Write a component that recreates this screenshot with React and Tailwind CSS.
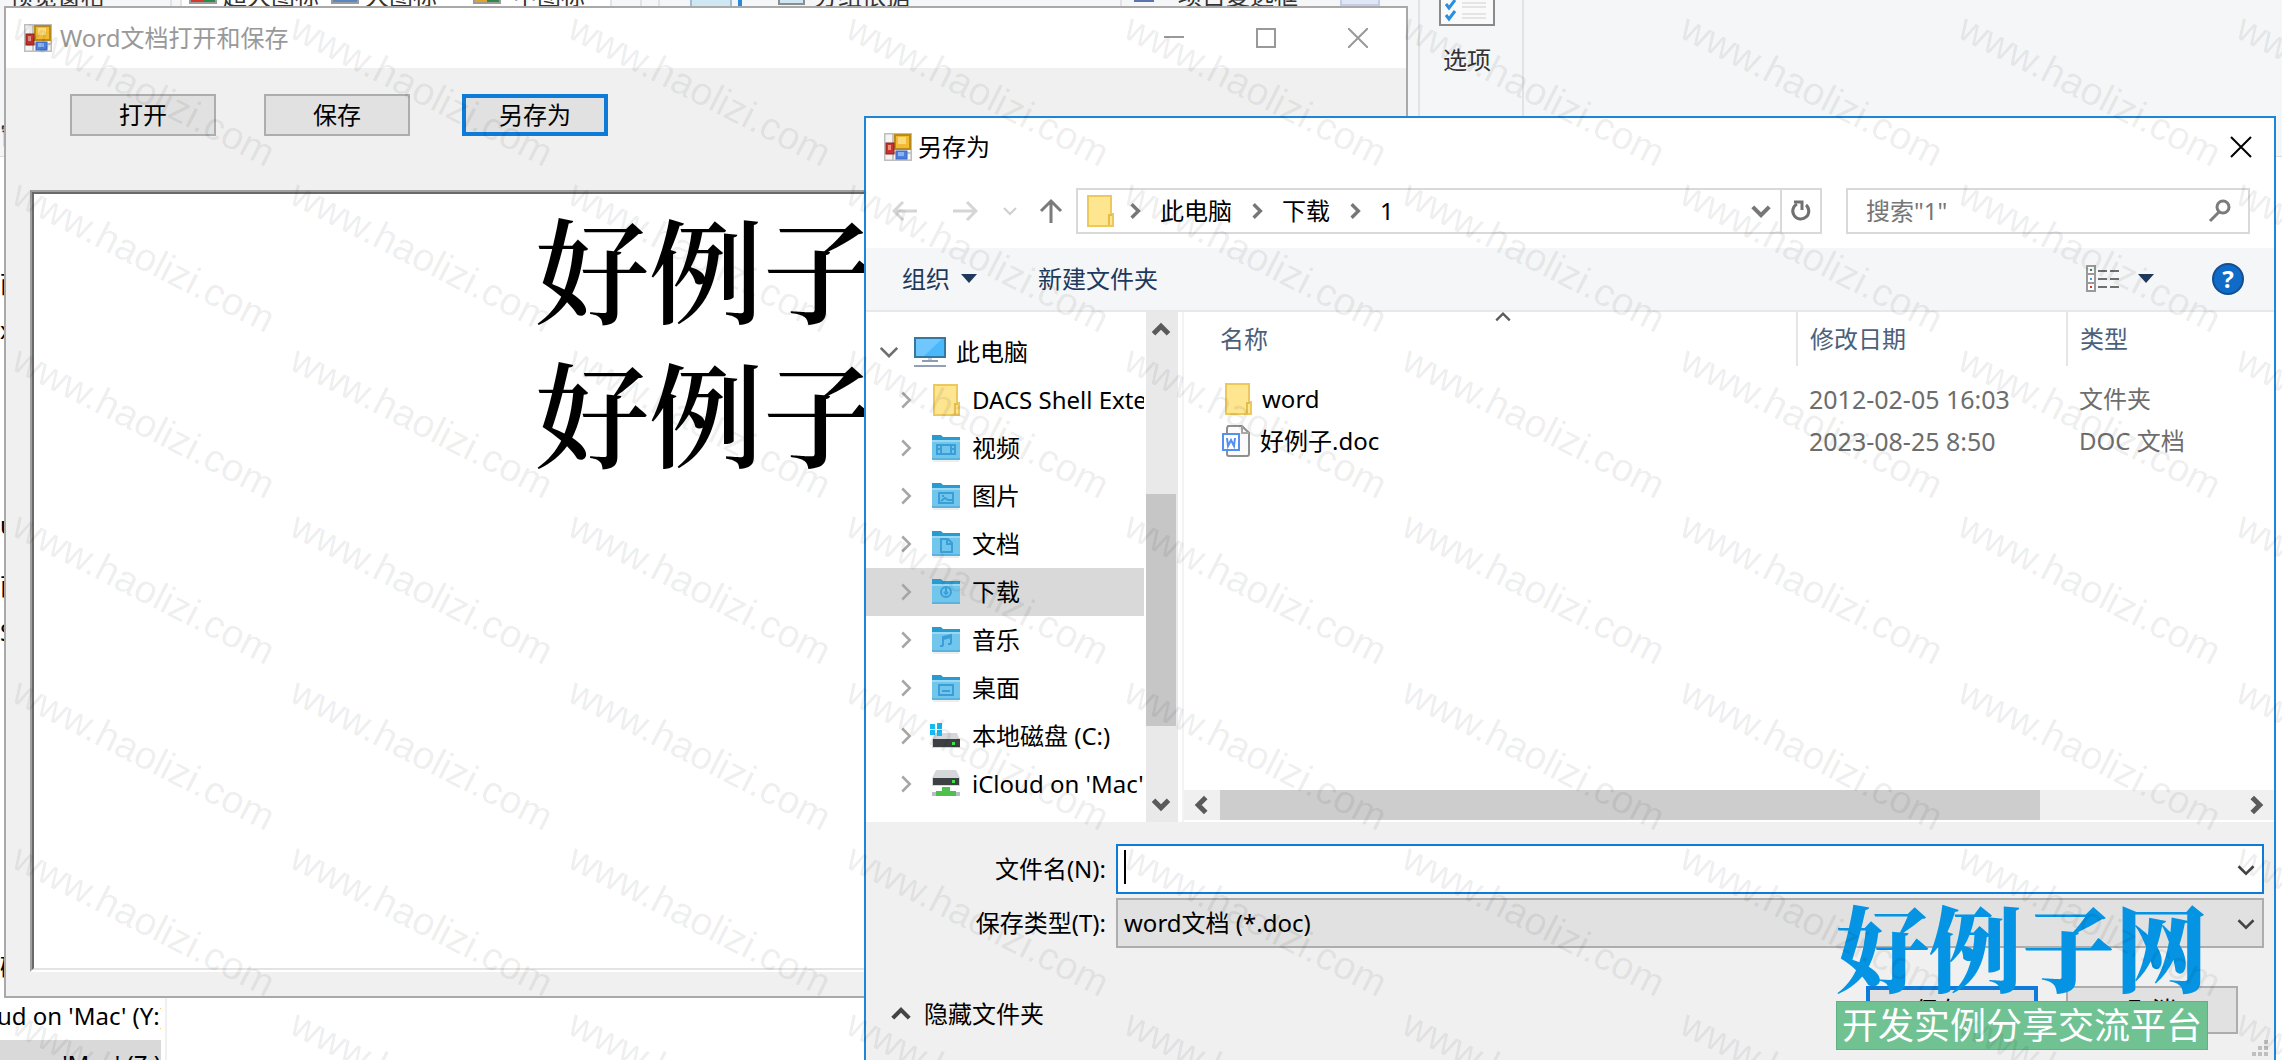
import { useState } from "react";

const uiFont =
  "font-['Noto_Sans','Noto_Sans_CJK_SC',sans-serif] text-[24px] leading-[32px]";

const FormIcon = () => (
  <svg className="shrink-0" width="28" height="28" viewBox="0 0 28 28">
    <rect x="0.5" y="0.5" width="27" height="27" fill="#f4f4f4" stroke="#bdbdbd" strokeWidth="2" />
    <path d="M9 1v26M1 20h26" stroke="#c4c4c4" strokeWidth="2" />
    <rect x="11" y="2" width="15" height="14" fill="#f3bb33" stroke="#b98a1c" strokeWidth="2" />
    <rect x="14" y="4" width="8" height="7" fill="#fbdc7c" />
    <rect x="2" y="10" width="8" height="11" fill="#c5352d" stroke="#8f211c" />
    <rect x="4" y="12" width="3" height="5" fill="#ea9089" />
    <rect x="12" y="18" width="11" height="8" fill="#4a80de" stroke="#3b68c0" />
    <rect x="14" y="19" width="6" height="4" fill="#8db2f4" />
  </svg>
);

const YellowFolder = () => (
  <svg className="shrink-0" width="28" height="32" viewBox="0 0 28 32">
    <path d="M2 1h23v18h2v12H2z" fill="#fee590" stroke="#edc85b" strokeWidth="2" />
    <path d="M23 30V20h3" fill="none" stroke="#e4bd4c" strokeWidth="2" />
  </svg>
);

const glyphs = {
  video: (
    <>
      <rect x="5" y="11" width="18" height="9" />
      <path d="M9 11v9M19 11v9M5 15h4M19 15h4" />
    </>
  ),
  picture: (
    <>
      <rect x="7" y="11" width="14" height="10" />
      <path d="M9 19l4-3 3 2h4M10 14h2" />
    </>
  ),
  document: <path d="M9 9h7l4 4v9H9zM15 9v5h5" />,
  download: (
    <>
      <circle cx="14" cy="14" r="5" />
      <path d="M14 10v4M12 14l2 2 2-2" />
    </>
  ),
  music: <path d="M11 20v-9l8-2v9M11 13l8-2M8 20h3M16 18h3" />,
  desktop: (
    <>
      <rect x="7" y="11" width="14" height="10" />
      <path d="M10 17h8" />
    </>
  ),
};

const BlueFolder = ({ kind }) => (
  <svg className="shrink-0" width="28" height="28" viewBox="0 0 28 28">
    <path d="M0 1h9l2 2h17v8H0z" fill="#2a9bcf" />
    <path d="M0 7h28v18H0z" fill="#72c6ec" />
    <path d="M0 7h28" stroke="#9bd9f3" strokeWidth="2" />
    <path d="M0 25h28" stroke="#5ab4dd" strokeWidth="2" />
    <path d="M1 27h26" stroke="#dcdcdc" />
    <g fill="none" stroke="#3a9fd8" strokeWidth="2">
      {glyphs[kind]}
    </g>
  </svg>
);

const ComputerIcon = () => (
  <svg className="shrink-0" width="32" height="32" viewBox="0 0 32 32">
    <rect x="1" y="2" width="30" height="19" fill="#4ab8fb" stroke="#33789f" strokeWidth="2" />
    <path d="M2 3h26L10 20H2z" fill="#7fcdff" opacity=".7" />
    <path d="M14 22h4v2h-4z" fill="#c9d4de" />
    <path d="M8 25h16" stroke="#8c9db3" strokeWidth="2" />
    <path d="M0 30h32" stroke="#8f9fb6" strokeWidth="2" />
  </svg>
);

const DiskIcon = () => (
  <svg className="-ml-0.5 shrink-0" width="30" height="28" viewBox="0 0 30 28">
    <path d="M5 11h22l3 7v8H2v-8z" fill="#d5d7db" />
    <rect x="3" y="17" width="27" height="8" fill="#3d4043" />
    <rect x="22" y="20" width="3" height="3" fill="#3fe04a" />
    <path d="M0 2h5v5H0zM7 1h5v6H7zM0 8h5v5H0zM7 8h5v6H7z" fill="#18b9f2" />
  </svg>
);

const NetDiskIcon = () => (
  <svg className="shrink-0" width="28" height="28" viewBox="0 0 28 28">
    <path d="M4 0h20l4 8v8H0V8z" fill="#d5d7db" />
    <rect x="1" y="8" width="26" height="7" fill="#3d4043" />
    <rect x="20" y="10" width="3" height="3" fill="#3fe04a" />
    <path d="M10 17h8v4h6v5H4v-5h6z" fill="#4fc04e" />
    <path d="M0 22h4v4H0zM24 22h4v4h-4z" fill="#b9bcc0" />
  </svg>
);

const DocIcon = () => (
  <svg className="shrink-0" width="28" height="32" viewBox="0 0 28 32">
    <path d="M6 1h14l7 7v21a2 2 0 0 1-2 2H7a2 2 0 0 1-2-2V3z" fill="#fbfbfb" stroke="#8f8f8f" strokeWidth="2" />
    <path d="M20 1v7h7" fill="none" stroke="#a9a9a9" strokeWidth="2" />
    <rect x="1" y="9" width="16" height="16" fill="#fff" stroke="#568ff2" strokeWidth="2" />
    <path d="M5 13l1 8 3-6 3 6 1-8" fill="none" stroke="#568ff2" strokeWidth="2" />
  </svg>
);

const Chevron = ({ dir = "down", size = 16, color = "#5a5a5a", width = 2 }) => {
  const paths = {
    down: "M2 5l6 6 6-6",
    up: "M2 11l6-6 6 6",
    left: "M11 2L5 8l6 6",
    right: "M5 2l6 6-6 6",
  };
  return (
    <svg className="shrink-0" width={size} height={size} viewBox="0 0 16 16" fill="none">
      <path d={paths[dir]} stroke={color} strokeWidth={width} />
    </svg>
  );
};

const Triangle = () => (
  <svg width="16" height="10" viewBox="0 0 16 10">
    <path d="M0 0h16L8 9z" fill="#1e395b" />
  </svg>
);

const treeItems = [
  { name: "DACS Shell Extension", icon: <YellowFolder /> },
  { name: "视频", icon: <BlueFolder kind="video" /> },
  { name: "图片", icon: <BlueFolder kind="picture" /> },
  { name: "文档", icon: <BlueFolder kind="document" /> },
  { name: "下载", icon: <BlueFolder kind="download" /> },
  { name: "音乐", icon: <BlueFolder kind="music" /> },
  { name: "桌面", icon: <BlueFolder kind="desktop" /> },
  { name: "本地磁盘 (C:)", icon: <DiskIcon /> },
  { name: "iCloud on 'Mac' (Y:)", icon: <NetDiskIcon /> },
];

const files = [
  { name: "word", date: "2012-02-05 16:03", type: "文件夹", icon: <YellowFolder />, pad: "pl-[40px]" },
  { name: "好例子.doc", date: "2023-08-25 8:50", type: "DOC 文档", icon: <DocIcon />, pad: "pl-[38px]" },
];

// Explorer window that sits behind everything
const Explorer = () => (
  <div className="flex h-full flex-col bg-white text-[#333]">
    <div className="flex h-[157px] shrink-0 justify-between overflow-hidden border-b border-[#dadbdc] bg-[#f5f6f7]">
      <div className="-mt-5 flex h-8 whitespace-nowrap">
        <div className="w-[172px] shrink-0">
          <p className="border-r-2 border-[#e2e3e4] pl-[9px]">预览窗格</p>
          <p className="mt-[107px] w-1 overflow-hidden">窗</p>
        </div>
        <span className="ml-2 flex w-[432px] items-start border-x-2 border-[#e2e3e4] bg-white pl-[7px]">
          <i className="mr-1.5 h-[24px] w-7 border-2 border-[#9b9b9b] bg-[linear-gradient(90deg,#d33a2c_50%,#2c8a4b_50%)]" />
          <span className="w-[102px]">超大图标</span>
          <i className="ml-1.5 mr-1.5 h-[24px] w-7 border-2 border-[#9b9b9b] bg-[#5b86c4]" />
          <span className="w-[108px]">大图标</span>
          <i className="mr-3 h-[24px] w-7 border-2 border-[#9b9b9b] bg-[linear-gradient(90deg,#e0a52b_50%,#2c8a4b_50%)]" />
          <span>中图标</span>
        </span>
        <i className="ml-7 w-5 border-x-2 border-[#e2e3e4]" />
        <i className="ml-[30px] w-[42px] border-2 border-[#9ac0d6] bg-[#cfe6f3]" />
        <i className="ml-1.5 w-1 bg-[#2a8ad8]" />
        <i className="ml-9 mr-[9px] h-[25px] w-[27px] border-2 border-[#8d8d8d] bg-[#cfe6f3]" />
        <span className="w-[308px] border-r-2 border-[#e2e3e4]">分组依据</span>
        <i className="ml-3 mr-6 h-[22px] w-5 bg-[#5b74ab]" />
        <span>项目复选框</span>
        <i className="ml-[42px] h-[26px] w-10 border-2 border-[#c3cde6] bg-[#dfe6f5]" />
      </div>
      <div className="mr-[758px] flex w-[106px] shrink-0 flex-col items-center border-x-2 border-[#e2e3e4] pr-2">
        <svg width="56" height="26" viewBox="0 0 56 26" fill="none">
          <path d="M1 0v25h54V0" fill="#fafafa" stroke="#8a8a8a" strokeWidth="2" />
          <path d="M23 3h24M23 7h24M23 14h24M23 18h24" stroke="#cfcfcf" />
          <path d="M7 4l3 4 6-8M7 15l3 4 6-8" stroke="#2a8fe0" strokeWidth="3" />
        </svg>
        <span className="mt-[18px]">选项</span>
      </div>
    </div>
    <ul className="flex w-[167px] flex-1 flex-col overflow-hidden whitespace-nowrap border-r-2 border-[#f0f0f0] pt-[111px] text-black">
      <li className="h-[46px] w-1 shrink-0 overflow-hidden">而</li>
      <li className="h-[195px] w-1 shrink-0 overflow-hidden">x</li>
      <li className="h-[61px] w-1 shrink-0 overflow-hidden">u</li>
      <li className="h-[46px] w-1 shrink-0 overflow-hidden">面</li>
      <li className="h-[335px] w-1 shrink-0 overflow-hidden">S</li>
      <li className="h-[41px] w-1 shrink-0 overflow-hidden">磁</li>
      <li className="flex h-12 w-[161px] shrink-0 justify-end overflow-hidden pt-2">
        <span className="-mr-1.5">iCloud on 'Mac' (Y:)</span>
      </li>
      <li className="flex h-12 w-[161px] shrink-0 justify-end overflow-hidden bg-[#d9d9d9] pt-2">
        Home on 'Mac' (Z:)
      </li>
    </ul>
  </div>
);

const WordWindow = () => (
  <section className="absolute bottom-[62px] left-1 top-1.5 flex w-[1404px] flex-col border-2 border-[#a9a9a9] bg-[#f0f0f0]">
    <header className="flex h-[60px] shrink-0 items-center bg-white pl-[18px] pr-[38px] text-[#999]">
      <FormIcon />
      <h1 className="ml-2 flex-1">Word文档打开和保存</h1>
      <div className="flex items-center gap-[72px]">
        <button type="button" aria-label="最小化">
          <svg width="20" height="20" viewBox="0 0 20 20">
            <path d="M0 9h20" stroke="#999" strokeWidth="2" />
          </svg>
        </button>
        <button type="button" aria-label="最大化">
          <svg width="20" height="20" viewBox="0 0 20 20">
            <rect x="1" y="1" width="18" height="18" fill="none" stroke="#999" strokeWidth="2" />
          </svg>
        </button>
        <button type="button" aria-label="关闭">
          <svg width="20" height="20" viewBox="0 0 20 20">
            <path d="M0 0l20 20M20 0L0 20" stroke="#999" strokeWidth="2" />
          </svg>
        </button>
      </div>
    </header>
    <div className="flex pl-16 pt-[26px]">
      <button type="button" className="mr-12 h-[42px] w-[146px] border-2 border-[#adadad] bg-[#e1e1e1] text-black">
        打开
      </button>
      <button type="button" className="mr-[52px] h-[42px] w-[146px] border-2 border-[#adadad] bg-[#e1e1e1] text-black">
        保存
      </button>
      <button type="button" className="h-[42px] w-[146px] border-4 border-[#0f7bd9] bg-[#e1e1e1] text-black">
        另存为
      </button>
    </div>
    <div className="mx-6 mb-6 mt-[54px] flex-1 border-2 border-b-white border-l-[#a0a0a0] border-r-white border-t-[#a0a0a0]">
      <div className="h-full border-2 border-b-[#e3e3e3] border-l-[#696969] border-r-[#e3e3e3] border-t-[#696969] bg-white text-center font-['Noto_Serif_CJK_SC','Noto_Sans_CJK_SC',serif] text-[114px] font-semibold leading-[144px] text-black">
        <p>好例子</p>
        <p>好例子</p>
      </div>
    </div>
  </section>
);

const NavTree = () => {
  const [selected, setSelected] = useState("下载");

  return (
    <nav className="flex w-[312px] shrink-0">
      <ul className="w-[278px] overflow-hidden whitespace-nowrap pt-4">
        <li>
          <button type="button" className="flex h-12 w-full items-center pl-3">
            <Chevron size={22} color="#6f6f6f" width={2} />
            <span className="ml-3.5 mr-2.5">
              <ComputerIcon />
            </span>
            此电脑
          </button>
        </li>
        {treeItems.map((item) => (
          <li key={item.name}>
            <button
              type="button"
              onClick={() => setSelected(item.name)}
              className={`flex h-12 w-full items-center pl-[30px] ${
                selected === item.name ? "bg-[#d9d9d9]" : "bg-white"
              }`}
            >
              <Chevron dir="right" size={20} color="#a6a6a6" width={2} />
              <span className="ml-4 mr-3 w-7 shrink-0">{item.icon}</span>
              {item.name}
            </button>
          </li>
        ))}
      </ul>
      {/* scrollbar */}
      <div className="ml-0.5 flex w-8 flex-col items-center bg-[#e9e9e9] py-2 pr-0.5">
        <Chevron dir="up" size={20} width={4} />
        <div className="mt-[154px] h-[232px] w-[30px] self-start bg-[#c6c6c6]" />
        <div className="mt-auto">
          <Chevron size={20} width={4} />
        </div>
      </div>
    </nav>
  );
};

const FileList = () => (
  <div className="ml-1 flex min-w-0 flex-1 flex-col border-l-2 border-[#f3f3f3]">
    <div className="relative flex-1">
      <span className="absolute left-[310px] top-[-4px]">
        <Chevron dir="up" size={18} width={2} />
      </span>
      <table className="w-full table-fixed text-left">
        <colgroup>
          <col className="w-[613px]" />
          <col className="w-[270px]" />
          <col />
        </colgroup>
        <thead className="text-[#4c607a]">
          <tr className="h-[54px]">
            <th className="border-r-2 border-[#e5e5e5] pl-9 font-normal">名称</th>
            <th className="border-r-2 border-[#e5e5e5] pl-3 font-normal">修改日期</th>
            <th className="pl-3 font-normal">类型</th>
          </tr>
        </thead>
        <tbody>
          <tr className="h-3">
            <td colSpan={3} />
          </tr>
          {files.map((file) => (
            <tr key={file.name} className="h-[42px] text-[#6d6d6d]">
              <td className={file.pad}>
                <div className="flex items-center gap-2.5 text-black">
                  {file.icon}
                  {file.name}
                </div>
              </td>
              <td className="pl-3 text-[25px]">{file.date}</td>
              <td className="pl-3">{file.type}</td>
            </tr>
          ))}
        </tbody>
      </table>
    </div>
    <div className="mb-0.5 flex h-[30px] items-center bg-[#f0f0f0] px-2">
      <Chevron dir="left" size={20} width={4} />
      <div className="ml-2 mr-[206px] h-full flex-1 bg-[#cdcdcd]" />
      <Chevron dir="right" size={20} width={4} />
    </div>
  </div>
);

const SaveDialog = () => {
  const [fileName, setFileName] = useState("");

  return (
    <section className="absolute bottom-0 left-[864px] right-1.5 top-[116px] flex flex-col border-2 border-b-0 border-[#1f85d6] bg-white text-black">
      <header className="flex h-[58px] shrink-0 items-center pl-[18px] pr-[22px]">
        <FormIcon />
        <h2 className="ml-1.5 flex-1">另存为</h2>
        <button type="button" aria-label="关闭">
          <svg width="22" height="22" viewBox="0 0 22 22">
            <path d="M1 1l20 20M21 1L1 21" stroke="#000" strokeWidth="2" />
          </svg>
        </button>
      </header>

      {/* Address bar */}
      <div className="flex h-[72px] shrink-0 items-center pb-2 pl-[26px] pr-6 pt-[6px]">
        <button type="button" aria-label="后退">
          <svg width="26" height="24" viewBox="0 0 26 24" fill="none">
            <path d="M25 12H3M11 3l-9 9 9 9" stroke="#d5d5d5" strokeWidth="3" />
          </svg>
        </button>
        <button type="button" aria-label="前进" className="ml-[34px]">
          <svg width="26" height="24" viewBox="0 0 26 24" fill="none">
            <path d="M1 12h22M15 3l9 9-9 9" stroke="#d5d5d5" strokeWidth="3" />
          </svg>
        </button>
        <button type="button" aria-label="最近" className="ml-6">
          <Chevron size={16} color="#cfcfcf" />
        </button>
        <button type="button" aria-label="向上" className="ml-5">
          <svg width="26" height="26" viewBox="0 0 26 26" fill="none">
            <path d="M13 25V3M3 13L13 3l10 10" stroke="#7b7b7b" strokeWidth="3" />
          </svg>
        </button>
        <div className="ml-3 flex h-[46px] flex-1 items-center border-2 border-[#d9d9d9] pl-2">
          <YellowFolder />
          <span className="ml-3 mr-4 flex">
            <Chevron dir="right" size={18} color="#777" width={3} />
          </span>
          <button type="button">此电脑</button>
          <span className="mx-4 flex">
            <Chevron dir="right" size={18} color="#777" width={3} />
          </span>
          <button type="button">下载</button>
          <span className="mx-4 flex">
            <Chevron dir="right" size={18} color="#777" width={3} />
          </span>
          <button type="button">1</button>
          <span className="ml-auto mr-2">
            <Chevron size={22} color="#777" width={3} />
          </span>
          <button type="button" aria-label="刷新" className="flex h-full w-10 items-center justify-center border-l-2 border-[#d9d9d9]">
            <svg width="22" height="24" viewBox="0 0 22 24" fill="none">
              <path d="M16 6a8 8 0 1 1-9-1" stroke="#707070" strokeWidth="3" />
              <path d="M4 3h8v8" stroke="#707070" strokeWidth="3" />
            </svg>
          </button>
        </div>
        <label className="ml-6 flex h-[46px] w-[404px] items-center border-2 border-[#d9d9d9] pl-[18px] pr-4">
          <input
            type="text"
            aria-label="搜索"
            placeholder={'搜索"1"'}
            className="min-w-0 flex-1 bg-transparent outline-none placeholder:text-[#767676]"
          />
          <svg width="24" height="24" viewBox="0 0 24 24" fill="none">
            <circle cx="15" cy="8" r="6" stroke="#7b7b7b" strokeWidth="3" />
            <path d="M11 13L2 22" stroke="#7b7b7b" strokeWidth="3" />
          </svg>
        </label>
      </div>

      {/* Toolbar */}
      <div className="flex h-16 shrink-0 items-center border-b-2 border-[#e7e8ea] bg-[#f5f6f7] pl-9 pr-[30px] text-[#1e395b]">
        <button type="button" className="flex items-center gap-[11px]">
          组织
          <Triangle />
        </button>
        <button type="button" className="ml-[61px]">
          新建文件夹
        </button>
        <button type="button" aria-label="视图" className="ml-auto flex items-center gap-[18px]">
          <svg width="34" height="28" viewBox="0 0 34 28" fill="none">
            <path d="M1 1h8v25H1zM1 9h8M1 18h8" fill="#fff" stroke="#9a9a9a" strokeWidth="2" />
            <path d="M12 6h9M24 6h9M12 14h9M24 14h9M12 22h9M24 22h9" stroke="#6f6f6f" strokeWidth="2" />
            <path d="M4 5h2" stroke="#3c8a5c" strokeWidth="2" />
            <path d="M4 14h2" stroke="#4f8df0" strokeWidth="2" />
            <path d="M4 22h2" stroke="#e03131" strokeWidth="2" />
          </svg>
          <Triangle />
        </button>
        <button
          type="button"
          className="ml-[58px] flex h-8 w-8 items-center justify-center rounded-full border-2 border-[#114f91] bg-[#0f6ac8] font-bold text-white"
        >
          ?
        </button>
      </div>

      <div className="flex min-h-0 flex-1">
        <NavTree />
        <FileList />
      </div>

      <footer className="shrink-0 bg-[#f0f0f0] pb-[26px] pl-6 pr-2.5 pt-[22px]">
        <div className="mb-1 flex items-center">
          <label htmlFor="file-name" className="w-[216px] text-right">
            文件名(N):
          </label>
          <div className="relative ml-2.5 flex-1">
            <input
              id="file-name"
              type="text"
              value={fileName}
              onChange={(e) => setFileName(e.target.value)}
              className="block h-[50px] w-full border-2 border-[#0f7bd9] bg-white pl-1.5 outline-none"
            />
            <span className="absolute left-2 top-1.5 h-[34px] w-0.5 bg-black" />
            <span className="absolute right-2 top-4">
              <Chevron size={20} color="#444" />
            </span>
          </div>
        </div>
        <div className="flex items-center">
          <label htmlFor="file-type" className="w-[216px] text-right">
            保存类型(T):
          </label>
          <div className="relative ml-2.5 flex-1">
            <select
              id="file-type"
              className="block h-[50px] w-full appearance-none border-2 border-[#adadad] bg-[#e1e1e1] pl-1.5"
            >
              <option>word文档 (*.doc)</option>
            </select>
            <span className="absolute right-2 top-4">
              <Chevron size={20} color="#444" />
            </span>
          </div>
        </div>
        <div className="mt-[38px] flex items-center pr-[26px]">
          <button type="button" className="mr-auto flex items-center gap-3 pt-2">
            <Chevron dir="up" size={22} color="#444" width={3} />
            隐藏文件夹
          </button>
          <button type="button" className="mr-7 h-12 w-[172px] border-4 border-[#0f7bd9] bg-[#e1e1e1]">
            保存(S)
          </button>
          <button type="button" className="h-12 w-[172px] border-2 border-[#adadad] bg-[#e1e1e1]">
            取消
          </button>
        </div>
      </footer>

      <svg className="absolute bottom-1 right-1.5" width="16" height="16" viewBox="0 0 16 16">
        <path d="M12 0h4v4h-4zM6 6h4v4H6zM12 6h4v4h-4zM0 12h4v4H0zM6 12h4v4H6zM12 12h4v4h-4z" fill="#bfbfbf" />
      </svg>
    </section>
  );
};

const SiteLogo = () => (
  <div className="absolute bottom-2.5 right-[74px] w-[372px] whitespace-nowrap">
    <div className="mb-1 text-center font-['Noto_Serif_CJK_SC','Noto_Sans_CJK_SC',serif] text-[93px] font-black leading-[104px] text-[#0594e3]">
      好例子网
    </div>
    <div className="h-[49px] border border-[#63b085] bg-[#70c293] text-center text-[36px] leading-[48px] text-white">
      开发实例分享交流平台
    </div>
  </div>
);

const Watermark = () => (
  <div
    aria-hidden="true"
    className="pointer-events-none absolute inset-0 grid auto-rows-[166px] grid-cols-[repeat(9,278px)] overflow-hidden pl-7 font-['Liberation_Sans',Arial,sans-serif] text-[39px] leading-[40px] text-black/8"
  >
    {[...Array(63)].map((_, index) => (
      <span key={index} className="origin-top-left rotate-[27deg] pt-2">
        www.haolizi.com
      </span>
    ))}
  </div>
);

const App = () => (
  <main className={`relative h-screen min-h-[1060px] overflow-hidden ${uiFont}`}>
    <Explorer />
    <WordWindow />
    <SaveDialog />
    <SiteLogo />
    <Watermark />
  </main>
);

export default App;
